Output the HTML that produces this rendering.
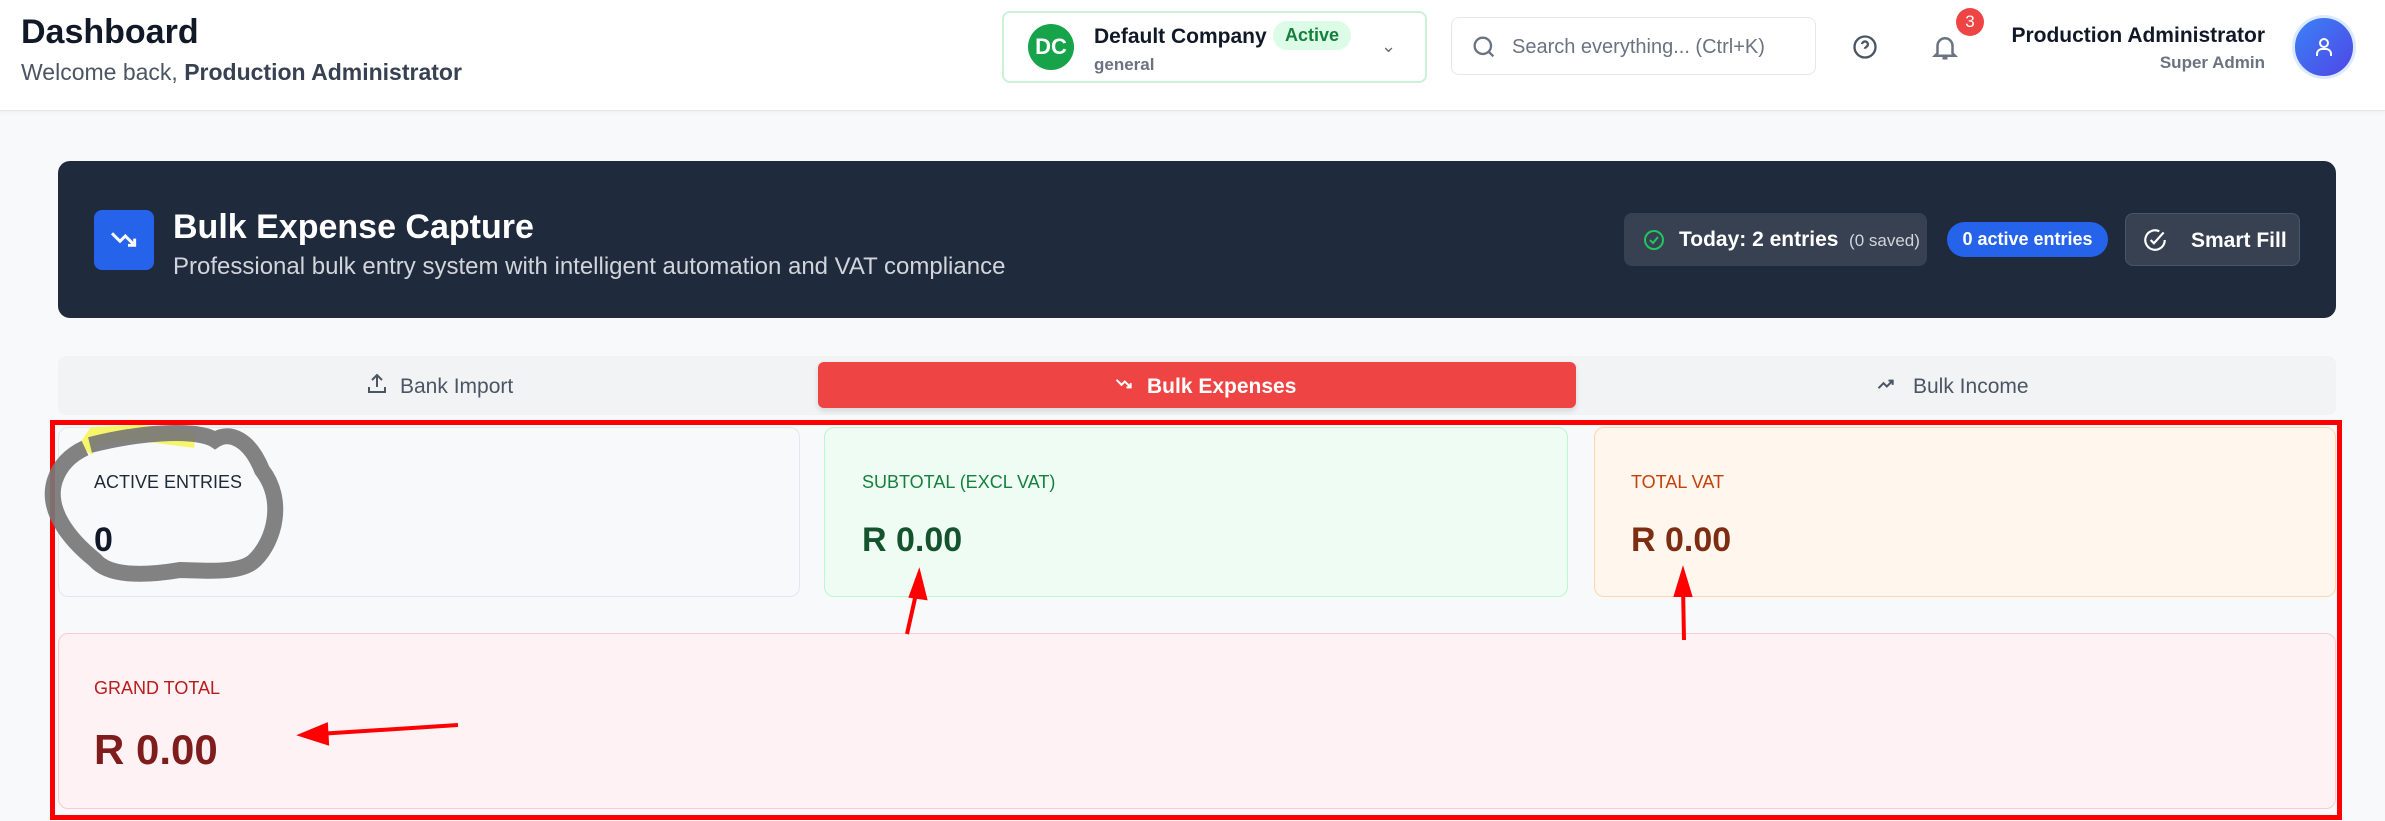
<!DOCTYPE html>
<html><head><meta charset="utf-8"><style>
*{box-sizing:border-box;margin:0;padding:0}
body{width:2385px;height:821px;overflow:hidden;background:#f8f9fb;font-family:"Liberation Sans",sans-serif;position:relative}
.a{position:absolute}
.hdr{left:0;top:0;width:2385px;height:111px;background:#fff;border-bottom:1px solid #e5e7eb;box-shadow:0 2px 4px rgba(0,0,0,.04)}
.card{border-radius:10px;border:1.5px solid}
.lab{font-size:18px}
.val{font-size:34px;font-weight:bold}
</style></head><body>
<div class="a hdr"></div>
<div class="a" style="left:21px;top:13px;font-size:34px;font-weight:bold;color:#111827">Dashboard</div>
<div class="a" style="left:21px;top:59px;font-size:23px;color:#4b5563">Welcome back, <b style="color:#374151">Production Administrator</b></div>
<div class="a" style="left:1002px;top:11px;width:425px;height:72px;border:2px solid #c9f2d6;border-radius:8px;background:#fff"></div>
<div class="a" style="left:1028px;top:24px;width:46px;height:46px;border-radius:50%;background:#16a34a;color:#fff;font-weight:bold;font-size:22px;text-align:center;line-height:46px">DC</div>
<div class="a" style="left:1094px;top:25px;font-size:21px;font-weight:bold;color:#111827">Default Company</div>
<div class="a" style="left:1273px;top:21px;padding:4px 12px;border-radius:14px;background:#dcfce7;color:#15803d;font-size:18px;font-weight:bold">Active</div>
<div class="a" style="left:1094px;top:55px;font-size:17px;color:#6b7280;font-weight:bold">general</div>
<div class="a" style="left:1381px;top:36px;font-size:18px;color:#6b7280">⌄</div>
<div class="a" style="left:1451px;top:17px;width:365px;height:58px;border:1.5px solid #e5e7eb;border-radius:8px;background:#fff;overflow:hidden">
<svg class="a" style="left:18px;top:15px" width="28" height="28" viewBox="0 0 24 24" fill="none" stroke="#6b7280" stroke-width="2"><circle cx="11" cy="11" r="7"/><path d="M20 20l-4-4"/></svg>
<div class="a" style="left:60px;top:18px;font-size:20px;color:#6b7280;white-space:nowrap">Search everything... (Ctrl+K)</div></div>
<svg class="a" style="left:1851px;top:33px" width="28" height="28" viewBox="0 0 24 24" fill="none" stroke="#4b5563" stroke-width="2"><circle cx="12" cy="12" r="9"/><path d="M9.5 9.5a2.5 2.5 0 015 .5c0 1.7-2.5 2-2.5 3.5M12 17h.01"/></svg>
<svg class="a" style="left:1930px;top:31px" width="30" height="32" viewBox="0 0 24 24" fill="none" stroke="#6b7280" stroke-width="2"><path d="M6 17V11a6 6 0 0112 0v6l2 2H4zM10 21h4"/></svg>
<div class="a" style="left:1956px;top:8px;width:28px;height:28px;border-radius:50%;background:#ef4444;color:#fff;font-size:17px;text-align:center;line-height:28px">3</div>
<div class="a" style="left:1900px;top:24px;width:365px;text-align:right;font-size:21px;font-weight:bold;color:#111827">Production Administrator</div>
<div class="a" style="left:1900px;top:53px;width:365px;text-align:right;font-size:17px;color:#6b7280;font-weight:bold">Super Admin</div>
<div class="a" style="left:2292px;top:15px;width:64px;height:64px;border-radius:50%;background:linear-gradient(135deg,#3b82f6,#4f46e5);border:3px solid #dbeafe"></div>
<svg class="a" style="left:2312px;top:35px" width="24" height="24" viewBox="0 0 24 24" fill="none" stroke="#fff" stroke-width="2"><circle cx="12" cy="8" r="4"/><path d="M5 21v-2a5 5 0 015-5h4a5 5 0 015 5v2"/></svg>

<div class="a" style="left:58px;top:161px;width:2278px;height:157px;background:#1f2a3c;border-radius:12px"></div>
<div class="a" style="left:94px;top:210px;width:60px;height:60px;background:#2563eb;border-radius:8px"></div>
<svg class="a" style="left:108px;top:224px" width="32" height="32" viewBox="0 0 24 24" fill="none" stroke="#fff" stroke-width="2.2"><path d="M3 7l6 6 4-4 7 7M20 11v5h-5"/></svg>
<div class="a" style="left:173px;top:208px;font-size:34px;font-weight:bold;color:#fff">Bulk Expense Capture</div>
<div class="a" style="left:173px;top:253px;font-size:24px;color:#d1d5db">Professional bulk entry system with intelligent automation and VAT compliance</div>
<div class="a" style="left:1624px;top:213px;width:303px;height:53px;background:#374151;border-radius:8px"></div>
<svg class="a" style="left:1642px;top:228px" width="24" height="24" viewBox="0 0 24 24" fill="none" stroke="#22c55e" stroke-width="2"><circle cx="12" cy="12" r="9"/><path d="M8 12l3 3 5-6"/></svg>
<div class="a" style="left:1679px;top:228px;font-size:21px;font-weight:bold;color:#fff;white-space:nowrap">Today: 2 entries <span style="font-size:17px;font-weight:normal;color:#d1d5db">&nbsp;(0 saved)</span></div>
<div class="a" style="left:1947px;top:222px;width:161px;height:35px;background:#2563eb;border-radius:18px;color:#fff;font-size:18px;font-weight:bold;text-align:center;line-height:35px">0 active entries</div>
<div class="a" style="left:2125px;top:213px;width:175px;height:53px;background:#374151;border:1px solid #4b5563;border-radius:8px"></div>
<svg class="a" style="left:2142px;top:227px" width="26" height="26" viewBox="0 0 24 24" fill="none" stroke="#fff" stroke-width="2"><path d="M21 12a9 9 0 11-5-8"/><path d="M8 12l3 3 9-10"/></svg>
<div class="a" style="left:2191px;top:229px;font-size:21px;font-weight:bold;color:#fff">Smart Fill</div>

<div class="a" style="left:58px;top:356px;width:2278px;height:59px;background:#f1f3f5;border-radius:8px"></div>
<div class="a" style="left:818px;top:362px;width:758px;height:46px;background:#ef4444;border-radius:6px;box-shadow:0 3px 6px rgba(0,0,0,.12)"></div>
<svg class="a" style="left:365px;top:372px" width="24" height="24" viewBox="0 0 24 24" fill="none" stroke="#4b5563" stroke-width="2"><path d="M12 15V3M7 8l5-5 5 5M4 15v5h16v-5"/></svg>
<div class="a" style="left:400px;top:375px;font-size:21px;color:#4b5563">Bank Import</div>
<svg class="a" style="left:1112px;top:374px" width="24" height="20" viewBox="0 0 24 24" fill="none" stroke="#fff" stroke-width="2.4"><path d="M3 7l6 6 4-4 7 7M20 11v5h-5"/></svg>
<div class="a" style="left:1147px;top:375px;font-size:21px;font-weight:bold;color:#fff">Bulk Expenses</div>
<svg class="a" style="left:1874px;top:374px" width="24" height="20" viewBox="0 0 24 24" fill="none" stroke="#4b5563" stroke-width="2.4"><path d="M3 17l6-6 4 4 7-7M20 13V8h-5"/></svg>
<div class="a" style="left:1913px;top:375px;font-size:21px;color:#4b5563">Bulk Income</div>

<div class="a card" style="left:58px;top:427px;width:742px;height:170px;background:#f8f9fb;border-color:#e5e7eb"></div>
<div class="a card" style="left:824px;top:427px;width:744px;height:170px;background:#effcf3;border-color:#bbf7d0"></div>
<div class="a card" style="left:1594px;top:427px;width:742px;height:170px;background:#fff6ee;border-color:#fed7aa"></div>
<div class="a card" style="left:58px;top:633px;width:2278px;height:176px;background:#fef2f4;border-color:#fecaca"></div>
<div class="a lab" style="left:94px;top:472px;color:#1f2937">ACTIVE ENTRIES</div>
<div class="a val" style="left:94px;top:521px;color:#111827">0</div>
<div class="a lab" style="left:862px;top:472px;color:#15803d">SUBTOTAL (EXCL VAT)</div>
<div class="a val" style="left:862px;top:521px;color:#14532d">R 0.00</div>
<div class="a lab" style="left:1631px;top:472px;color:#c2410c">TOTAL VAT</div>
<div class="a val" style="left:1631px;top:521px;color:#7c2d12">R 0.00</div>
<div class="a lab" style="left:94px;top:678px;color:#b91c1c">GRAND TOTAL</div>
<div class="a" style="left:94px;top:726px;font-size:42px;font-weight:bold;color:#7f1d1d">R 0.00</div>

<div class="a" style="left:50px;top:420px;width:2292px;height:400px;border:5px solid #ff0000"></div>
<svg class="a" style="left:0;top:0" width="2385" height="821">
<path d="M85 450 L95 435 L140 433 L195 440" stroke="#f5f55a" stroke-width="16" fill="none" opacity=".9"/>
<path d="M90 445 C150 430 200 430 215 440 C230 430 250 440 262 470 C285 500 275 540 255 560 C240 575 200 570 180 570 C150 575 110 578 95 560 C70 540 45 510 55 480 C60 465 70 455 85 448" stroke="#777" stroke-width="16" fill="none" opacity=".92"/>
<g stroke="#f00" stroke-width="4" fill="#f00">
<path d="M907 634 L918 585" fill="none"/><path d="M919 574 L911 596 L925 598 Z"/>
<path d="M1684 640 L1683 585" fill="none"/><path d="M1683 572 L1676 595 L1690 595 Z"/>
<path d="M458 725 L318 734" fill="none"/><path d="M302 735 L326 725 L327 743 Z"/>
</g></svg>
</body></html>
